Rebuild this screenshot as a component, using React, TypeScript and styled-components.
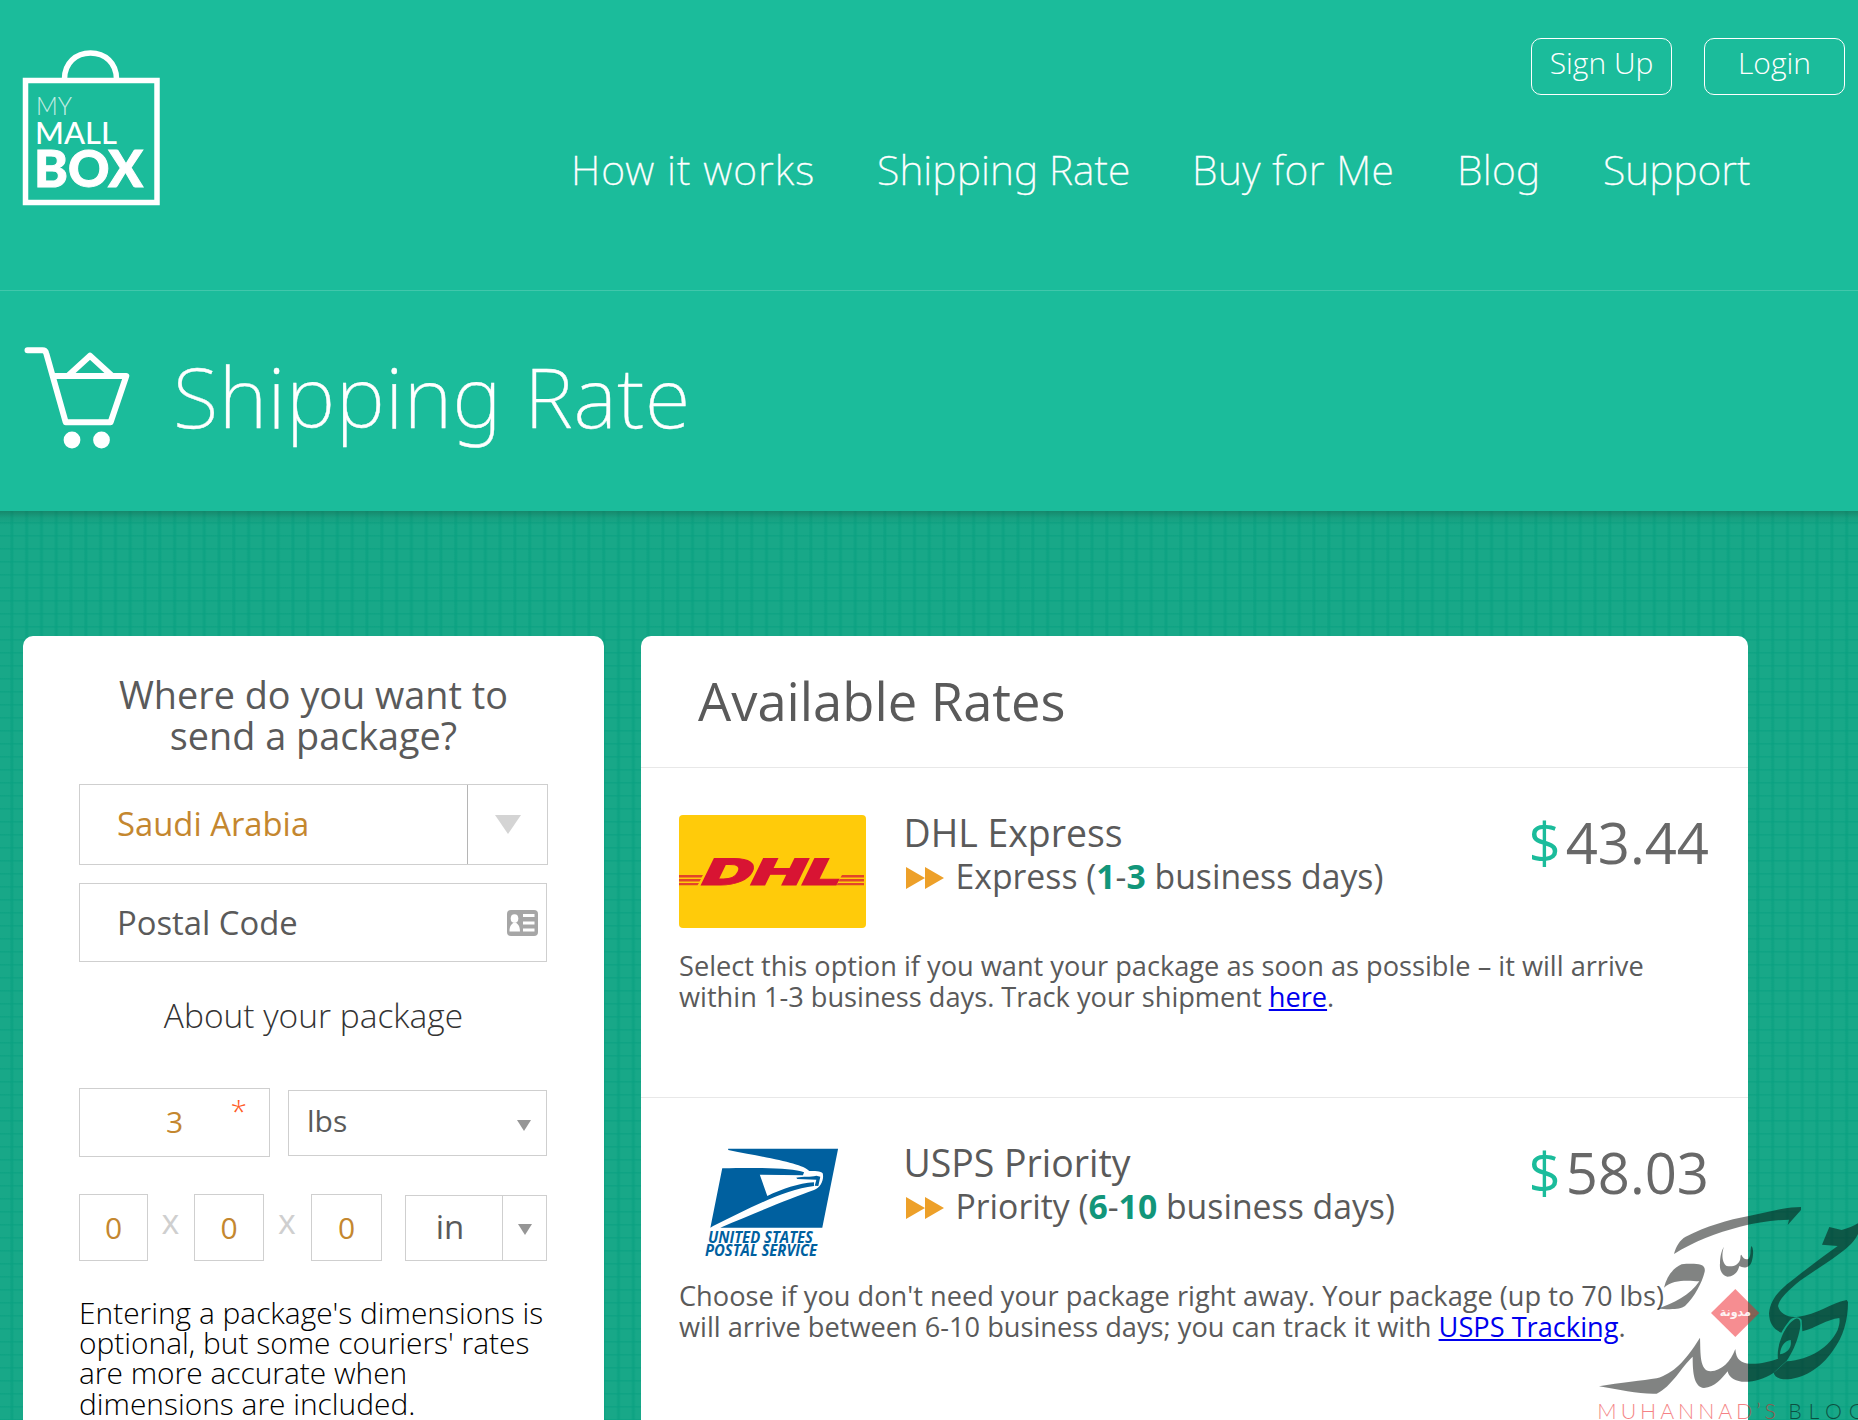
import React from "react";
import styled, { createGlobalStyle } from "styled-components";

const GlobalStyle = createGlobalStyle`
  *, *::before, *::after { box-sizing: border-box; }
  body {
    margin: 0;
    background: #18a888;
    font-family: "Open Sans", "Noto Sans", sans-serif;
    color: #5a5a5a;
  }
`;

const thin = `"Noto Sans", "Open Sans", sans-serif`;

const Page = styled.div`
  position: relative;
  width: 1858px;
  height: 1420px;
  overflow: hidden;
  display: flex;
  flex-direction: column;
`;

const Header = styled.header`
  flex: none;
  height: 291px;
  background: #1bbc9b;
  border-bottom: 1px solid #41c7ab;
  display: flex;
  justify-content: space-between;
  align-items: flex-start;
  padding: 38px 13px 0 22px;
  color: #fff;
`;

const Logo = styled.svg`
  display: block;
  margin-top: 11px;
`;

const HeaderRight = styled.div`
  display: flex;
  flex-direction: column;
  align-items: flex-end;
`;

const Actions = styled.div`
  display: flex;
  gap: 32px;
`;

const ActionLink = styled.a`
  width: 141px;
  height: 57px;
  border: 1px solid #fff;
  border-radius: 10px;
  font-size: 30px;
  font-weight: 300;
  line-height: 47px;
  text-align: center;
`;

const Nav = styled.nav`
  display: flex;
  margin: 49px 93px 0 0;
`;

const NavItem = styled.a<{ $width: number; $tracking?: number }>`
  width: ${(p) => p.$width}px;
  font-family: ${thin};
  font-weight: 200;
  font-size: 41px;
  line-height: 50px;
  white-space: nowrap;
  letter-spacing: ${(p) => p.$tracking ?? 0}px;
  -webkit-text-stroke: 0.35px #fff;
`;

const Hero = styled.section`
  flex: none;
  height: 220px;
  background: #1bbc9b;
  display: flex;
  align-items: flex-start;
  padding: 50px 0 0 24px;
  color: #fff;
`;

const Cart = styled.svg`
  display: block;
  margin-top: 5px;
`;

const HeroTitle = styled.h1`
  margin: 0 0 0 42px;
  font-family: ${thin};
  font-weight: 200;
  font-size: 83px;
  line-height: 110px;
  letter-spacing: 0.55px;
  -webkit-text-stroke: 0.4px #fff;
`;

const Main = styled.main`
  flex: 1;
  min-height: 0;
  display: flex;
  align-items: stretch;
  gap: 37px;
  padding: 125px 0 0 23px;
  background:
    linear-gradient(rgba(20, 110, 85, 0.55), rgba(20, 130, 100, 0.2) 7px, rgba(20, 140, 110, 0) 15px) no-repeat,
    linear-gradient(90deg, rgba(8, 160, 128, 0.35) 0 1px, rgba(8, 160, 128, 0.6) 1px 3px, rgba(8, 160, 128, 0.25) 3px 4px, transparent 4px) 10px 0 / 14.8px 13px,
    linear-gradient(rgba(8, 160, 128, 0.55) 0 1px, rgba(8, 160, 128, 0.35) 1px 2px, transparent 2px) 0 11px / 14.8px 13px,
    #18a888;
`;

const Card = styled.section<{ $width: number }>`
  flex: none;
  width: ${(p) => p.$width}px;
  background: #fff;
  border-radius: 10px 10px 0 0;
`;

const Form = styled.div`
  display: flex;
  flex-direction: column;
  padding: 38px 56px 0;
`;

const FormTitle = styled.h2`
  margin: 0 0 28px;
  text-align: center;
  font-weight: 400;
  font-size: 37.8px;
  line-height: 41px;
`;

const Field = styled.div<{ $width: number; $height: number; $accent?: boolean; $size?: number }>`
  flex: none;
  display: flex;
  align-items: center;
  width: ${(p) => p.$width}px;
  height: ${(p) => p.$height}px;
  border: 1px solid #cfcfcf;
  font-size: ${(p) => p.$size ?? 32.8}px;
  line-height: 40px;
  color: ${(p) => (p.$accent ? "#c4872f" : "#5a5a5a")};
`;

const FieldText = styled.span<{ $lift?: number }>`
  flex: 1;
  padding: 0 0 ${(p) => p.$lift ?? 0}px 37px;
`;

const Centered = styled.span<{ $lift?: number; $shift?: number }>`
  flex: 1;
  text-align: center;
  padding: 0 ${(p) => p.$shift ?? 0}px ${(p) => p.$lift ?? 0}px 0;
`;

const UnitText = styled.span`
  flex: 1;
  padding: 0 0 3px 18px;
`;

const DropButton = styled.span<{ $width: number; $color: string; $pad?: number }>`
  align-self: stretch;
  width: ${(p) => p.$width}px;
  border-left: 1px solid ${(p) => p.$color};
  display: flex;
  align-items: center;
  justify-content: center;
  padding-top: ${(p) => p.$pad ?? 0}px;
`;

const Triangle = styled.span<{ $w: number; $h: number; $color: string }>`
  width: 0;
  height: 0;
  border-left: ${(p) => p.$w / 2}px solid transparent;
  border-right: ${(p) => p.$w / 2}px solid transparent;
  border-top: ${(p) => p.$h}px solid ${(p) => p.$color};
`;

const LbsTriangle = styled(Triangle)`
  margin: 5px 15px 0 0;
`;

const PostalField = styled(Field)`
  margin-top: 18px;
`;

const CardIcon = styled.svg`
  margin-right: 8px;
`;

const SubTitle = styled.h3`
  margin: 33px 0 53px;
  text-align: center;
  font-weight: 300;
  font-size: 33.5px;
  line-height: 40px;
  color: #333;
`;

const FieldRow = styled.div<{ $gap?: number }>`
  display: flex;
  align-items: center;
  gap: ${(p) => p.$gap ?? 0}px;
`;

const WeightField = styled(Field)`
  position: relative;
`;

const Required = styled.sup`
  position: absolute;
  top: 0;
  right: 22px;
  font-size: 30px;
  line-height: 44px;
  font-weight: 300;
  color: #ff5a25;
`;

const DimensionRow = styled.div`
  display: flex;
  align-items: flex-end;
  margin-top: 37px;
`;

const Times = styled.span<{ $width: number }>`
  width: ${(p) => p.$width}px;
  height: 67px;
  text-align: center;
  font-size: 34px;
  line-height: 55px;
  color: #cfcfcf;
  padding-right: 1px;
`;

const UnitSelect = styled(Field)`
  margin-left: 23px;
`;

const Note = styled.p`
  margin: 37px 0 0;
  font-weight: 300;
  font-size: 29.9px;
  line-height: 30.2px;
  color: #000;
  white-space: nowrap;
`;

const RatesTitle = styled.h2`
  margin: 0;
  height: 132px;
  padding: 35px 0 0 57px;
  border-bottom: 1px solid #e8e8e8;
  font-weight: 400;
  font-size: 52.5px;
  line-height: 60px;
`;

const Rate = styled.article`
  height: 330px;
  padding: 43px 39px 0 38px;
  border-bottom: 1px solid #e8e8e8;
`;

const RateTop = styled.div`
  display: flex;
  align-items: flex-start;
`;

const CarrierLogo = styled.svg`
  flex: none;
  display: block;
  margin-top: 4px;
`;

const RateInfo = styled.div`
  flex: 1;
  padding-left: 37.5px;
`;

const RateName = styled.h3`
  margin: 0;
  font-weight: 400;
  font-size: 37.4px;
  line-height: 43px;
`;

const RateSpeed = styled.div`
  display: flex;
  align-items: center;
  margin-top: 1px;
  font-size: 33.75px;
  line-height: 42px;

  svg { margin: 4px 12px 0 2px; }
  b { color: #12967a; }
`;

const Price = styled.div`
  display: flex;
  gap: 5px;
  margin-top: 1px;
  font-size: 56.2px;
  line-height: 60px;
  color: #686868;
`;

const Currency = styled.span`
  color: #1bbc9b;
`;

const RateText = styled.p`
  margin: 22px 0 0;
  font-size: 27.2px;
  line-height: 31px;
  white-space: nowrap;

  a { color: #0000ee; text-decoration: underline; }
`;

const Watermark = styled.svg`
  position: absolute;
  right: 0;
  bottom: 0;
`;

const DhlLogo = () => (
  <CarrierLogo width="187" height="113" viewBox="0 0 187 113">
    <rect width="187" height="113" rx="4" fill="#ffcb0a" />
    <g fill="#e2452a">
      <path d="M0 60h24l-1.500 2.500H0zM0 64h22l-1.500 2.500H0zM0 68h20l-1.500 2.300H0z" />
      <path d="M163 60h22v2.500h-23.500zM161 64h24v2.500h-25.500zM159 68h26v2.300h-27.500z" />
    </g>
    <text
      transform="translate(19.500 69.500) skewX(-26)"
      x="0"
      y="0"
      fontFamily="Inter, sans-serif"
      fontWeight="900"
      fontSize="36.500"
      textLength="139"
      lengthAdjust="spacingAndGlyphs"
      fill="#d81433"
      stroke="#d81433"
      strokeWidth="1"
    >
      DHL
    </text>
  </CarrierLogo>
);

const UspsLogo = () => (
  <CarrierLogo width="187" height="113" viewBox="39 55 187 113">
    <g fill="#00609f" transform="scale(0.3954 0.3333)">
      <path d="M223 176H501L461 413H203C300 365 380 325 440 300C458 292 466 268 462 250C458 243 440 243 428 243C410 220 330 205 223 180Z" />
      <path d="M208 235C300 232 385 234 415 247L412 256L303 254L322 318C360 297 400 280 440 277V288C360 300 270 360 185 408L178 413Z" />
      <path d="M395 263C415 258 430 262 446 257L456 260L451 288L442 287L446 269L398 267Z" />
    </g>
    <g fill="#00609f" fontFamily="Open Sans, sans-serif" fontStyle="italic" fontWeight="700" fontSize="15.500">
      <text x="68" y="153" textLength="105" lengthAdjust="spacingAndGlyphs">UNITED STATES</text>
      <text x="65" y="166" textLength="112" lengthAdjust="spacingAndGlyphs">POSTAL SERVICE</text>
    </g>
  </CarrierLogo>
);

const FastForward = () => (
  <svg width="38" height="26" viewBox="0 0 38 26" fill="#eda029">
    <path d="M0 2V24L19 13ZM19 2V24L38 13Z" />
  </svg>
);

type RateProps = {
  logo: React.ReactNode;
  name: string;
  speed: string;
  from: string;
  to: string;
  price: string;
  children: React.ReactNode;
};

const RateCard = ({ logo, name, speed, from, to, price, children }: RateProps) => (
  <Rate>
    <RateTop>
      {logo}
      <RateInfo>
        <RateName>{name}</RateName>
        <RateSpeed>
          <FastForward />
          <span>
            {speed} (<b>{from}</b>-<b>{to}</b> business days)
          </span>
        </RateSpeed>
      </RateInfo>
      <Price>
        <Currency>$</Currency>
        <span>{price}</span>
      </Price>
    </RateTop>
    <RateText>{children}</RateText>
  </Rate>
);

export default function App() {
  return (
    <Page>
      <GlobalStyle />
      <Header>
        <Logo width="138" height="157" viewBox="0 0 138 157">
          <path d="M42.500 30C42.500 14 54 4 68.500 4S94.500 14 94.500 30" fill="none" stroke="#fff" strokeWidth="5.500" />
          <rect x="3.500" y="31.500" width="131.500" height="122" fill="none" stroke="#fff" strokeWidth="5.500" />
          <g fill="#fff" fontFamily="Lato, sans-serif">
            <text x="14" y="66" fontSize="25" fontWeight="300" opacity="0.75" textLength="36" lengthAdjust="spacingAndGlyphs">MY</text>
            <text x="13" y="94.500" fontSize="30" fontWeight="500" textLength="82" lengthAdjust="spacingAndGlyphs">MALL</text>
            <text x="12" y="137.500" fontSize="51" fontWeight="900" stroke="#fff" strokeWidth="1" textLength="109" lengthAdjust="spacingAndGlyphs">BOX</text>
          </g>
        </Logo>
        <HeaderRight>
          <Actions>
            <ActionLink>Sign Up</ActionLink>
            <ActionLink>Login</ActionLink>
          </Actions>
          <Nav>
            <NavItem $width={306} $tracking={1.05}>How it works</NavItem>
            <NavItem $width={315} $tracking={0.1}>Shipping Rate</NavItem>
            <NavItem $width={265} $tracking={0.5}>Buy for Me</NavItem>
            <NavItem $width={146} $tracking={0.3}>Blog</NavItem>
            <NavItem $width={149}>Support</NavItem>
          </Nav>
        </HeaderRight>
      </Header>
      <Hero>
        <Cart width="107" height="104" viewBox="0 0 107 104" fill="none" stroke="#fff" strokeWidth="6" strokeLinecap="round" strokeLinejoin="round">
          <path d="M3.500 4.300H18.500Q21.500 4.300 22.300 7.500L41.700 76.300H86.600L102.300 30H31" />
          <path d="M44.900 29L66 9.700L87.100 29" />
          <g fill="#fff" stroke="none">
            <circle cx="48" cy="94" r="8.400" />
            <circle cx="77.500" cy="94" r="8.400" />
          </g>
        </Cart>
        <HeroTitle>Shipping Rate</HeroTitle>
      </Hero>
      <Main>
        <Card $width={581}>
          <Form>
            <FormTitle>
              Where do you want to
              <br />
              send a package?
            </FormTitle>
            <Field $width={469} $height={81} $accent>
              <FieldText $lift={2}>Saudi Arabia</FieldText>
              <DropButton $width={80} $color="#b5b5b5">
                <Triangle $w={26} $h={19} $color="#d4d4d4" />
              </DropButton>
            </Field>
            <PostalField $width={468} $height={79}>
              <FieldText>Postal Code</FieldText>
              <CardIcon width="31" height="26" viewBox="0 0 31 26">
                <rect width="31" height="26" rx="4" fill="#a6a6a6" />
                <g fill="#fff">
                  <ellipse cx="7.500" cy="8.500" rx="3.800" ry="4.300" />
                  <path d="M2.500 21.500C2.500 15 5 14.500 6.500 12.500H9C10.500 14.500 13 15 13 21.500Z" />
                  <path d="M16 4H27.500V7H16ZM16 11.500H27.500V14.500H16ZM16 18.500H27.500V21.500H16Z" />
                </g>
              </CardIcon>
            </PostalField>
            <SubTitle>About your package</SubTitle>
            <FieldRow $gap={18}>
              <WeightField $width={191} $height={69} $accent $size={30}>
                <Centered $lift={2}>3</Centered>
                <Required>*</Required>
              </WeightField>
              <Field $width={259} $height={66} $size={30}>
                <UnitText>lbs</UnitText>
                <LbsTriangle $w={15} $h={11} $color="#969696" />
              </Field>
            </FieldRow>
            <DimensionRow>
              <Field $width={69} $height={67} $accent $size={30}>
                <Centered>0</Centered>
              </Field>
              <Times $width={46}>x</Times>
              <Field $width={70} $height={67} $accent $size={30}>
                <Centered>0</Centered>
              </Field>
              <Times $width={47}>x</Times>
              <Field $width={71} $height={67} $accent $size={30}>
                <Centered>0</Centered>
              </Field>
              <UnitSelect $width={142} $height={66} $size={33}>
                <Centered $lift={2} $shift={8}>in</Centered>
                <DropButton $width={44} $color="#cfcfcf" $pad={2}>
                  <Triangle $w={14} $h={11} $color="#969696" />
                </DropButton>
              </UnitSelect>
            </DimensionRow>
            <Note>
              Entering a package's dimensions is
              <br />
              optional, but some couriers' rates
              <br />
              are more accurate when
              <br />
              dimensions are included.
            </Note>
          </Form>
        </Card>
        <Card $width={1107}>
          <RatesTitle>Available Rates</RatesTitle>
          <RateCard logo={<DhlLogo />} name="DHL Express" speed="Express" from="1" to="3" price="43.44">
            Select this option if you want your package as soon as possible – it will arrive
            <br />
            within 1-3 business days. Track your shipment <a>here</a>.
          </RateCard>
          <RateCard logo={<UspsLogo />} name="USPS Priority" speed="Priority" from="6" to="10" price="58.03">
            Choose if you don't need your package right away. Your package (up to 70 lbs)
            <br />
            will arrive between 6-10 business days; you can track it with <a>USPS Tracking</a>.
          </RateCard>
        </Card>
      </Main>
      <Watermark width="318" height="260" viewBox="0 0 954 780">
        <g opacity="0.5" fill="#050a08">
          <path d="M402 282C408 258 420 240 437 230C500 198 560 180 630 167L720 148C745 143 765 141 783 141V150L743 195L747 179C700 180 650 188 600 200C530 218 460 245 402 282Z" />
          <path d="M372 383C380 350 398 325 425 313C445 311 470 311 482 314C492 317 496 325 494 335C485 370 465 408 435 438C420 448 400 449 350 446C400 432 450 405 478 364C450 362 400 356 372 383Z" />
          <path d="M552 260C544 280 546 310 560 318C580 322 594 315 600 300C603 290 600 285 604 284C610 297 618 300 626 296C634 285 630 270 634 258C642 265 640 290 635 305C628 325 610 325 598 318C594 335 582 350 562 350C545 345 538 330 540 310C540 290 545 270 552 260Z" />
          <path d="M868 201L905 210C925 205 940 198 954 190V222C945 242 925 262 900 280C850 318 800 345 768 372C735 400 718 420 714 438C720 462 745 474 775 470C830 465 870 430 920 420L924 426C924 480 910 530 880 570C840 630 780 660 730 658C712 655 703 648 701 638L740 604C810 600 870 560 893 510C898 495 900 485 898 474C860 478 830 503 787 514L785 480C778 468 760 470 750 480C738 495 730 506 724 518C700 508 688 490 687 460C692 410 730 380 770 350C815 315 855 285 893 258L846 254Z" />
          <path
            fillRule="evenodd"
            d="M177 679C240 668 310 662 350 655C400 640 435 605 480 533C482 580 478 632 512 634C545 632 572 605 586 567C588 600 605 610 630 611C660 612 690 605 714 596C708 560 735 490 768 476C782 473 784 490 778 515C770 550 755 580 740 602L701 638C670 658 640 667 605 665C580 662 566 650 563 634C545 655 525 682 492 684C462 680 458 640 458 590C425 620 395 680 350 701C300 703 240 690 177 679ZM720 583C745 578 756 560 752 540C732 543 722 560 720 583Z"
          />
        </g>
        <path d="M586 387L658 459L586 531L513 459Z" fill="#ed1c24" opacity="0.500" />
        <text x="539" y="467" fontFamily="DejaVu Sans, sans-serif" fontWeight="700" fontSize="37" textLength="94" lengthAdjust="spacingAndGlyphs" fill="#fff" opacity="0.9">
          مدونة
        </text>
        <g fontFamily="Lato, sans-serif" fontWeight="300" fontSize="64" opacity="0.550">
          <text x="172" y="778" textLength="536" fill="#ed1c24">MUHANNAD’S</text>
          <text x="745" y="778" textLength="228" fill="#050a08">BLOG</text>
        </g>
      </Watermark>
    </Page>
  );
}
